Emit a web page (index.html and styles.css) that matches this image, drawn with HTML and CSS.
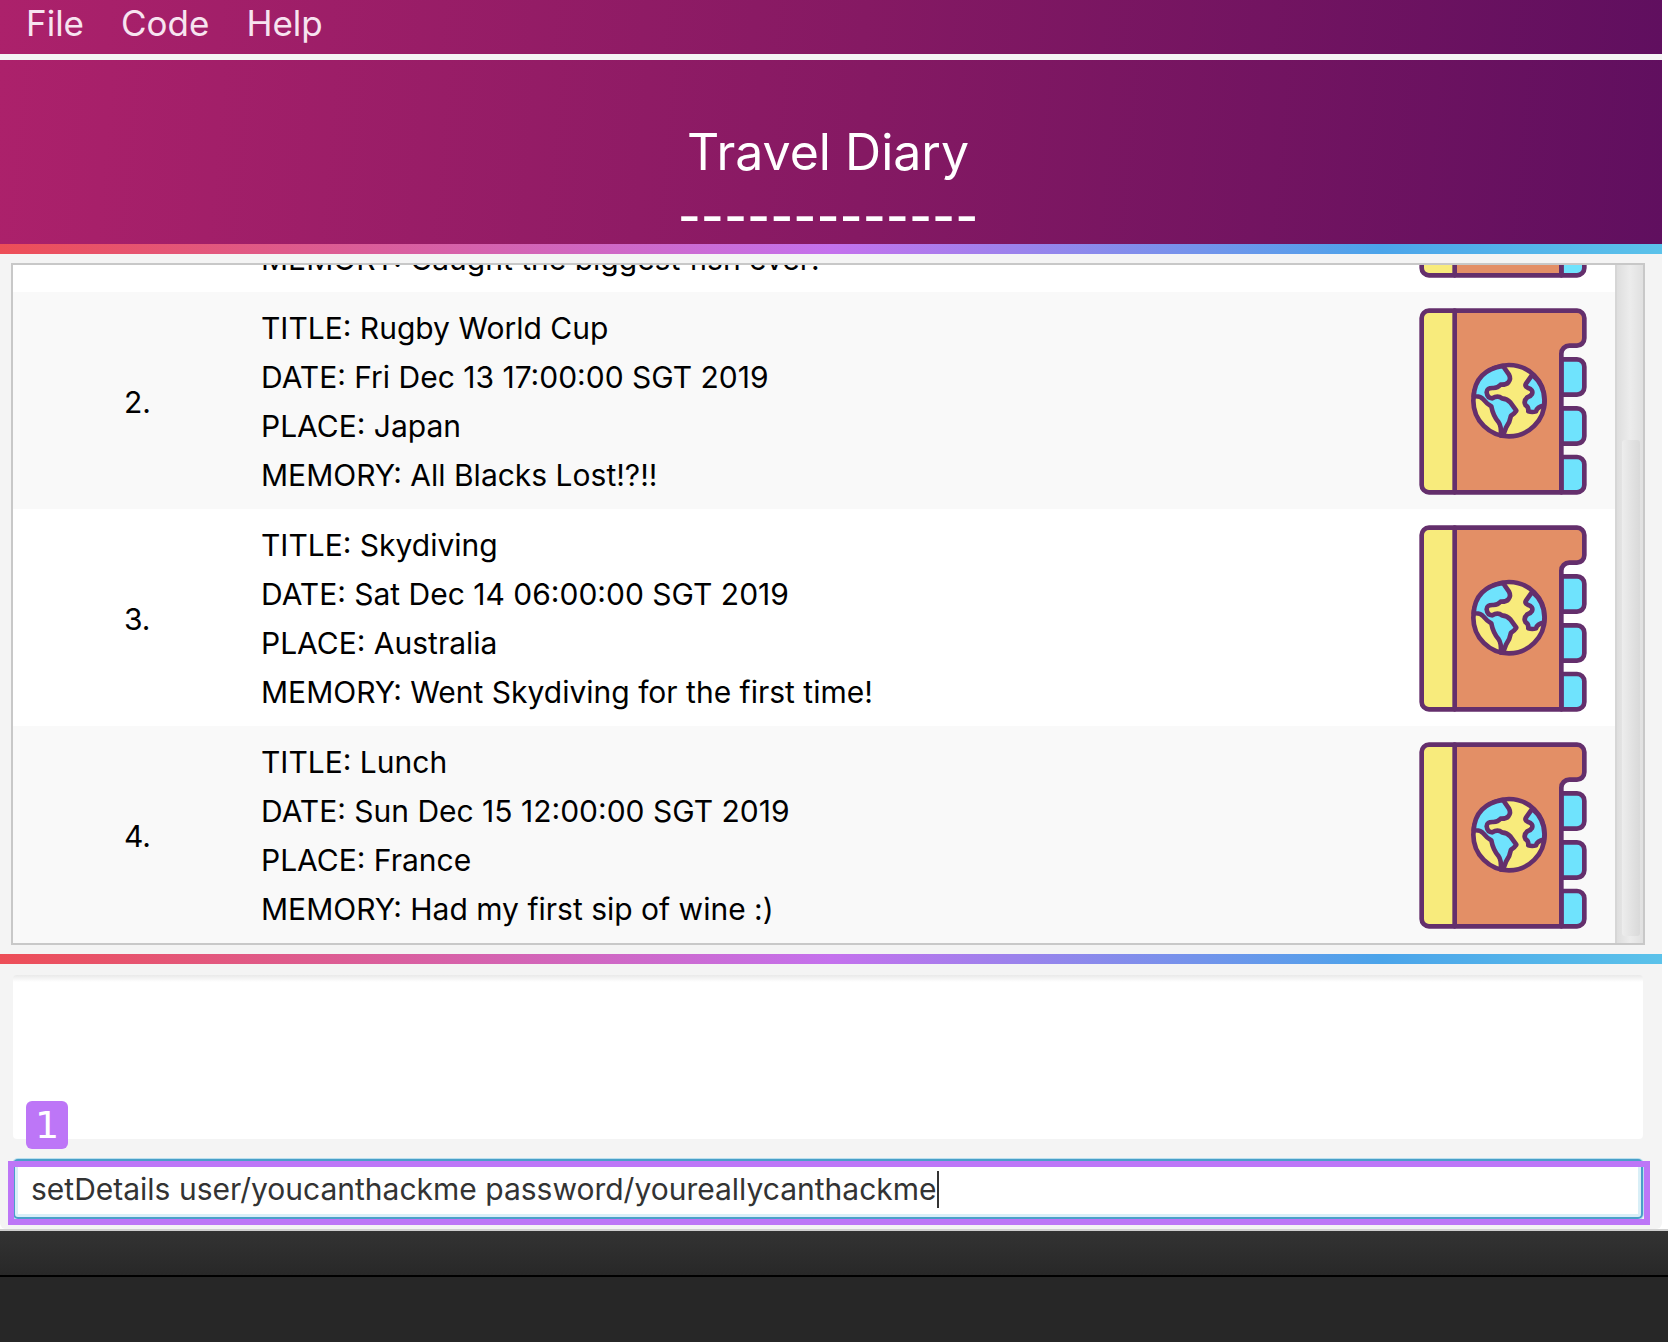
FILE: index.html
```html
<!DOCTYPE html>
<html lang="en">
<head>
<meta charset="utf-8">
<title>Travel Diary</title>
<link rel="stylesheet" href="styles.css">
</head>
<body>
<svg class="sprite" width="0" height="0" aria-hidden="true">
  <symbol id="diary" viewBox="57 203 504 561">
    <g stroke="#642f6c" stroke-width="14" stroke-linejoin="round" stroke-linecap="round">
      <path fill="#6fe3fd" d="M484 357H531A22 22 0 0 1 553 379V441A22 22 0 0 1 531 463H484ZM484 504H531A22 22 0 0 1 553 526V588A22 22 0 0 1 531 610H484ZM484 650H531A22 22 0 0 1 553 672V734A22 22 0 0 1 531 756H484Z"/>
      <path fill="#e38f66" d="M164 211H531A22 22 0 0 1 553 233V294A22 22 0 0 1 531 316H508A24 24 0 0 0 484 340V756H164Z"/>
      <path fill="#f8eb7c" d="M164 211H87A22 22 0 0 0 65 233V734A22 22 0 0 0 87 756H164Z"/>
      <circle fill="#f8eb7c" cx="327" cy="481" r="107"/>
      <path fill="#6fe3fd" d="M309 377L327 403Q334 416 325 426Q318 434 302 433Q294 443 280 443Q260 442 260 456Q262 474 277 474Q293 464 306 474Q322 476 331 486L349 511Q344 519 333 526Q330 545 318 562L309 586H303Q304 556 296 546Q279 526 274 498Q262 492 250 477Q241 466 221 468Q226 390 309 377Z"/>
      <path fill="#6fe3fd" d="M397 403L378 430Q373 437 383 442Q401 448 396 461Q392 468 382 471Q369 483 377 495Q386 500 385 513Q397 517 408 513Q412 499 432 496Q440 440 397 403Z"/>
    </g>
  </symbol>
</svg>
<div class="app">
  <nav class="menubar" aria-label="Main">
    <button type="button">File</button>
    <button type="button">Code</button>
    <button type="button">Help</button>
  </nav>
  <header class="banner">
    <h1>Travel Diary</h1>
    <div class="rule" aria-hidden="true">-------------</div>
  </header>
  <div class="stripe"></div>
  <main class="diary">
    <ol class="entries">
      <li class="entry cut">
        <span class="number"></span>
        <div class="details"><p>MEMORY: Caught the biggest fish ever!</p></div>
        <svg class="book" aria-hidden="true"><use href="#diary"/></svg>
      </li>
      <li class="entry">
        <span class="number">2.</span>
        <div class="details">
          <p>TITLE: Rugby World Cup</p>
          <p>DATE: Fri Dec 13 17:00:00 SGT 2019</p>
          <p>PLACE: Japan</p>
          <p>MEMORY: All Blacks Lost!?!!</p>
        </div>
        <svg class="book" aria-hidden="true"><use href="#diary"/></svg>
      </li>
      <li class="entry">
        <span class="number">3.</span>
        <div class="details">
          <p>TITLE: Skydiving</p>
          <p>DATE: Sat Dec 14 06:00:00 SGT 2019</p>
          <p>PLACE: Australia</p>
          <p>MEMORY: Went Skydiving for the first time!</p>
        </div>
        <svg class="book" aria-hidden="true"><use href="#diary"/></svg>
      </li>
      <li class="entry">
        <span class="number">4.</span>
        <div class="details">
          <p>TITLE: Lunch</p>
          <p>DATE: Sun Dec 15 12:00:00 SGT 2019</p>
          <p>PLACE: France</p>
          <p>MEMORY: Had my first sip of wine :)</p>
        </div>
        <svg class="book" aria-hidden="true"><use href="#diary"/></svg>
      </li>
    </ol>
    <div class="scrollbar"><div class="thumb"></div></div>
  </main>
  <div class="stripe"></div>
  <section class="console">
    <textarea class="result" readonly aria-label="Result"></textarea>
    <div class="command">
      <input type="text" aria-label="Command" size="50" value="setDetails user/youcanthackme password/youreallycanthackme">
      <span class="caret"></span>
      <div class="callout"><span class="badge">1</span></div>
    </div>
  </section>
</div>
<footer class="desktop"><div class="shade"></div></footer>
</body>
</html>
```
FILE: styles.css
```css
* { box-sizing: border-box; }

body {
  margin: 0;
  min-height: 100vh;
  display: flex;
  flex-direction: column;
  background: #fff;
  color: #000;
  font-family: Inter, "Liberation Sans", sans-serif;
  font-size: 30px;
}

.sprite { position: absolute; }

.app {
  margin-right: 6px;
  padding-bottom: 10px;
  background: #f4f4f4;
  border-radius: 0 0 6px 6px;
}

.menubar,
.banner {
  background: linear-gradient(95deg, #ac216b, #851963 52%, #600f5f);
}

.menubar {
  display: flex;
  gap: 37px;
  height: 54px;
  padding: 0 26px 8px;
}

.menubar button {
  padding: 0;
  border: 0;
  background: none;
  color: #f7e4f0;
  font: inherit;
  font-size: 35px;
}

.banner {
  height: 184px;
  margin-top: 6px;
  padding: 60px 6px 0 0;
  color: #fff;
  font-size: 50px;
  line-height: 64px;
  text-align: center;
}

.banner h1 {
  margin: 0;
  font-size: 50px;
  font-weight: 400;
}

.rule { font-weight: 500; }

.stripe {
  height: 10px;
  background: linear-gradient(90deg, #ed4e57, #c471ed 50%, #4ba4ea 83%, #5bc2ea);
}

.diary {
  display: flex;
  height: 682px;
  margin: 9px 17px 9px 11px;
  border: 2px solid #c8c8c8;
  overflow: hidden;
}

.entries {
  flex: 1;
  display: flex;
  flex-direction: column;
  justify-content: flex-end;
  margin: 0;
  padding: 0;
  list-style: none;
}

.entry {
  flex: none;
  display: flex;
  align-items: center;
  height: 217px;
  padding: 2px 28px 0 0;
  background: #fff;
}

.entry:nth-child(even) { background: #f9f9f9; }

.number {
  width: 248px;
  padding-left: 111px;
}

.details {
  flex: 1;
  line-height: 49px;
}

.cut .details {
  align-self: flex-end;
  padding-bottom: 8px;
}

.details p { margin: 0; }

.book {
  width: 168px;
  height: 187px;
}

.scrollbar {
  width: 28px;
  padding: 175px 3px 7px 5px;
  border-left: 2px solid #d6d6d6;
  background: linear-gradient(90deg, #dedede, #ececec 50%, #e0e0e0);
}

.thumb {
  height: 100%;
  border-radius: 3px;
  background: linear-gradient(90deg, #ededed, #d9d9d9);
}

.console { padding: 11px 19px 0 13px; }

.result {
  display: block;
  width: 100%;
  height: 164px;
  border: 0;
  border-radius: 4px;
  background: linear-gradient(#e9e9e9, #fff 7px);
  resize: none;
  outline: 0;
}

.command {
  position: relative;
  display: flex;
  align-items: center;
  height: 60px;
  margin-top: 20px;
  padding-left: 16px;
  border: 2px solid #4a9fc9;
  border-radius: 5px;
  background: #fff;
  box-shadow: inset 0 0 0 3px #d9eff7, 0 0 0 1px #b9dfed;
}

.command input {
  field-sizing: content;
  padding: 0;
  border: 0;
  outline: 0;
  background: none;
  color: #333;
  font: inherit;
}

.caret {
  width: 2px;
  height: 37px;
  background: #333;
}

.callout {
  position: absolute;
  inset: 0 -9px -8px -7px;
  border: 6px solid #bd76f7;
  pointer-events: none;
}

.badge {
  position: absolute;
  left: 12px;
  top: -66px;
  width: 42px;
  height: 48px;
  border-radius: 6px;
  background: #bd76f7;
  color: #fff;
  font: 38px/48px "DejaVu Sans", sans-serif;
  text-align: center;
}

.desktop {
  flex: 1;
  border-top: 2px solid #d0d0d0;
  background: #272727;
}

.shade {
  height: 46px;
  border-bottom: 2px solid #000;
  background: linear-gradient(#333, #282828);
}
```
